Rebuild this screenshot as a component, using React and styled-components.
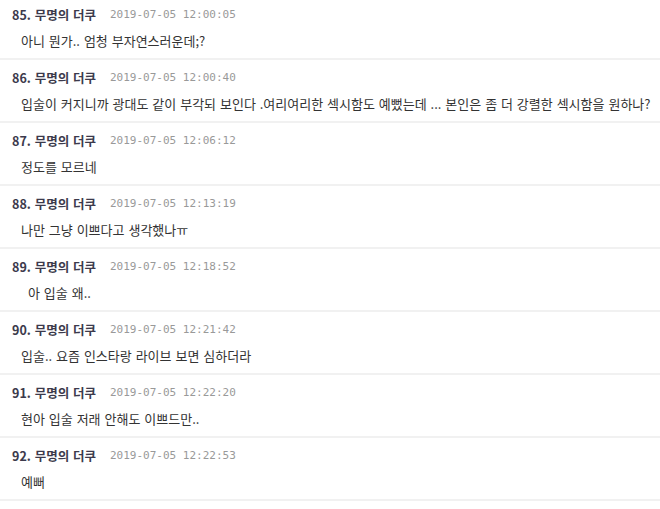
import styled, { createGlobalStyle } from 'styled-components';

const COMMENTS = [
  { no: 85, time: '2019-07-05 12:00:05', text: '아니 뭔가.. 엄청 부자연스러운데;?' },
  {
    no: 86,
    time: '2019-07-05 12:00:40',
    text: '입술이 커지니까 광대도 같이 부각되 보인다 .여리여리한 섹시함도 예뻤는데 ... 본인은 좀 더 강렬한 섹시함을 원하나?'
  },
  { no: 87, time: '2019-07-05 12:06:12', text: '정도를 모르네' },
  { no: 88, time: '2019-07-05 12:13:19', text: '나만 그냥 이쁘다고 생각했나ㅠ' },
  { no: 89, time: '2019-07-05 12:18:52', text: '아 입술 왜..', indent: true },
  { no: 90, time: '2019-07-05 12:21:42', text: '입술.. 요즘 인스타랑 라이브 보면 심하더라' },
  { no: 91, time: '2019-07-05 12:22:20', text: '현아 입술 저래 안해도 이쁘드만..' },
  { no: 92, time: '2019-07-05 12:22:53', text: '예뻐' }
];

const GlobalStyle = createGlobalStyle`
  html, body {
    margin: 0;
    padding: 0;
    background: #ffffff;
  }
  body {
    font-family: "Noto Sans CJK KR", "Noto Sans", sans-serif;
    overflow: hidden;
  }
`;

export default function App() {
  return (
    <>
      <GlobalStyle />
      <CommentList>
        {COMMENTS.map((c) => (
          <CommentItem key={c.no}>
            <CommentHead>
              <Author>{c.no}. 무명의 더쿠</Author>
              <Time>{c.time}</Time>
            </CommentHead>
            <CommentBody $indent={c.indent}>{c.text}</CommentBody>
          </CommentItem>
        ))}
      </CommentList>
    </>
  );
}

// стили
const CommentList = styled.ul`
  list-style: none;
  margin: -3px 0 0;
  padding: 0;
  width: 660px;
`;

const CommentItem = styled.li`
  display: flex;
  flex-direction: column;
  gap: 9px;
  padding: 8px 0 8px 12px;
  border-bottom: 2px solid #f1f1f1;
`;

const CommentHead = styled.div`
  display: flex;
  align-items: center;
  height: 18px;
`;

const Author = styled.span`
  width: 98px;
  font-size: 12.5px;
  word-spacing: 1px;
  font-weight: bold;
  color: #3c3a4c;
  white-space: nowrap;
`;

const Time = styled.span`
  font-family: "DejaVu Sans Mono", "Liberation Mono", monospace;
  font-size: 11px;
  color: #999999;
  white-space: nowrap;
`;

const CommentBody = styled.div`
  height: 18px;
  line-height: 18px;
  padding-left: ${(p) => (p.$indent ? '16px' : '9px')};
  font-size: 13px;
  word-spacing: 1px;
  color: #333333;
  white-space: nowrap;
`;
